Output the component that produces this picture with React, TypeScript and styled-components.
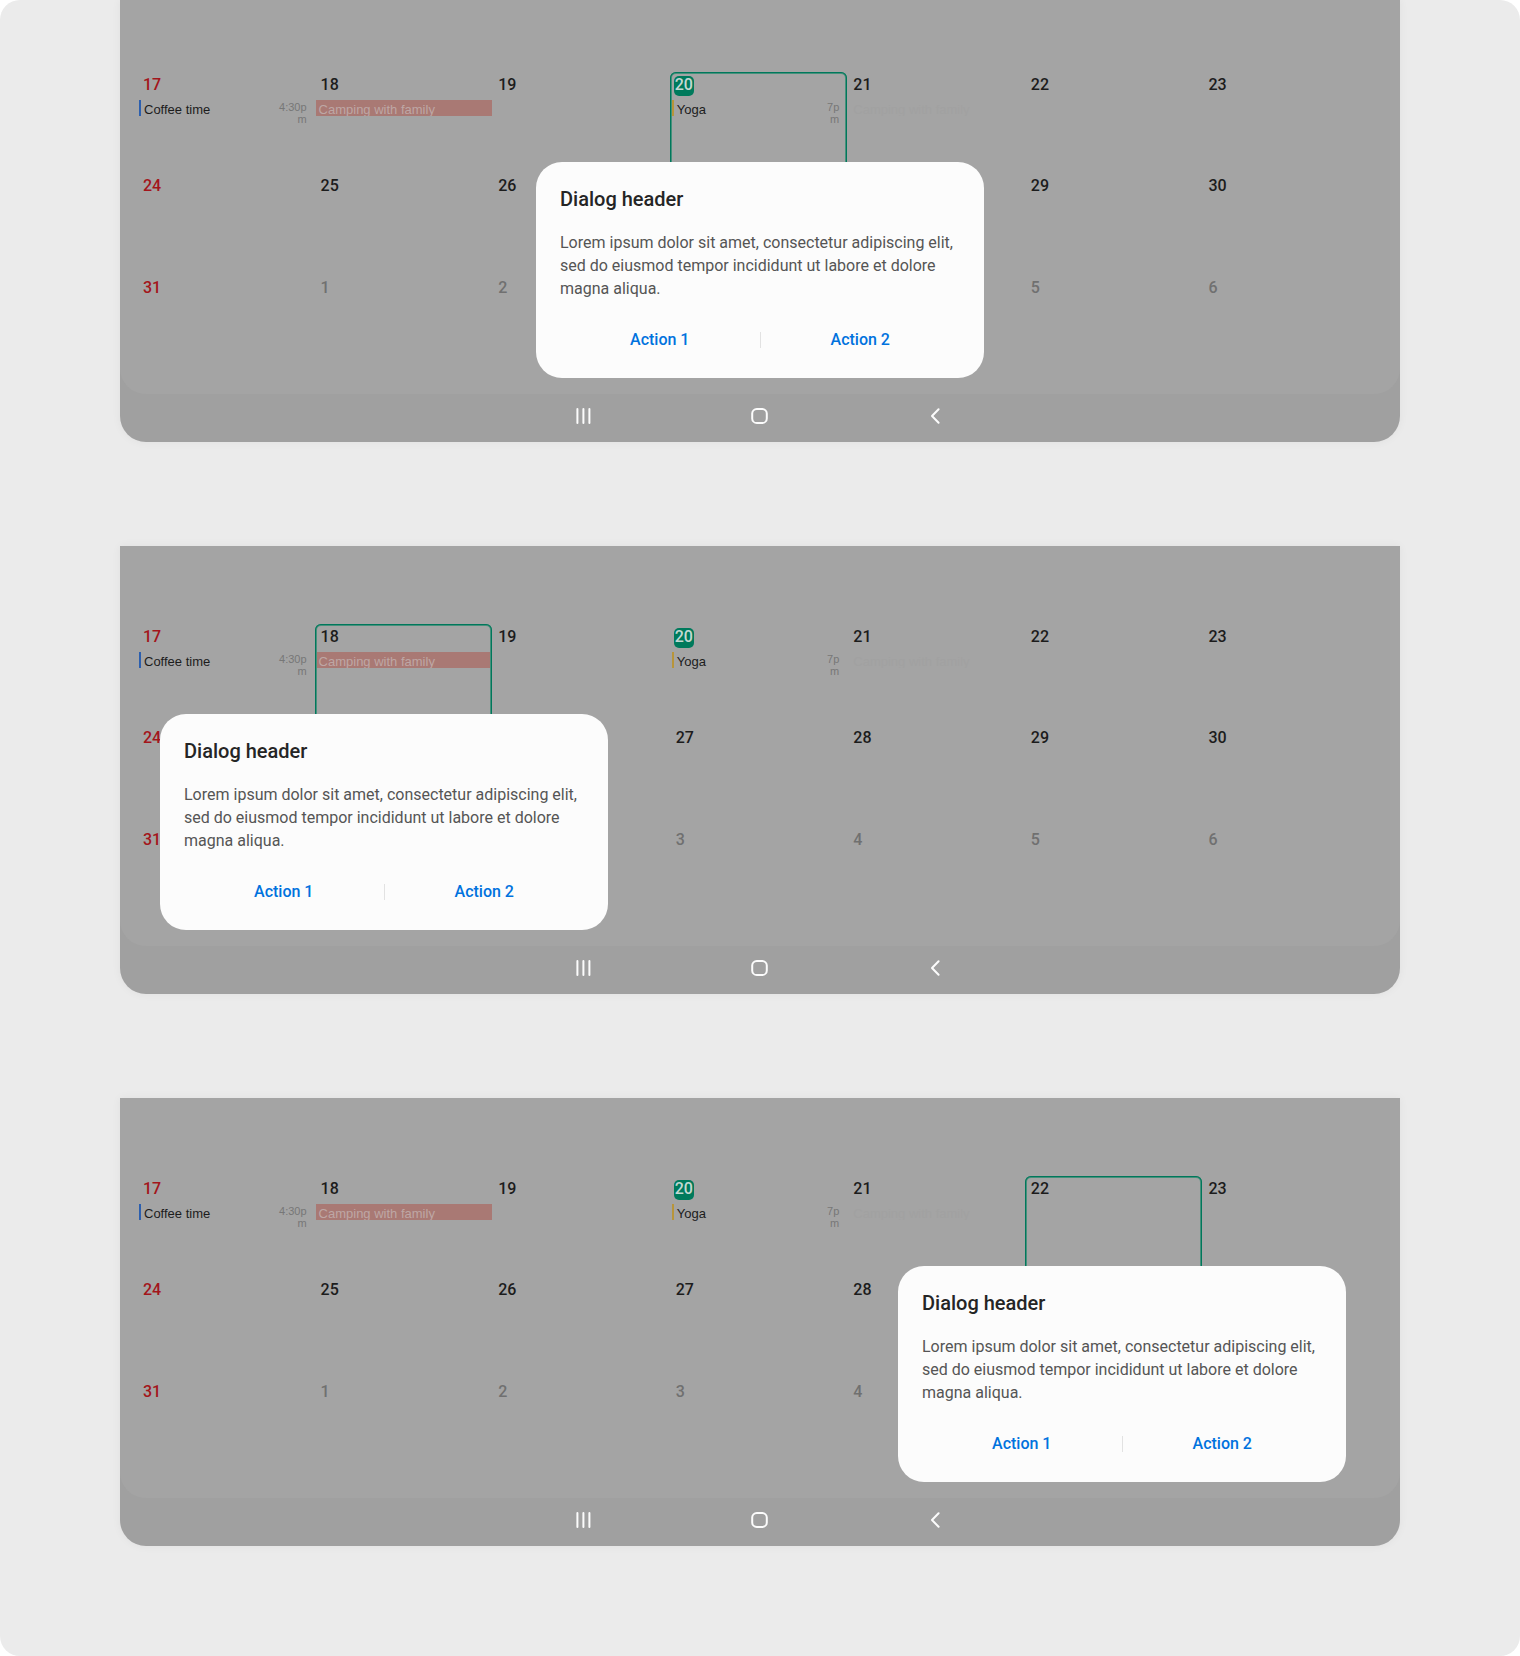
import React from "react";
import styled, { createGlobalStyle, css } from "styled-components";

const GlobalStyle = createGlobalStyle`
  *, *::before, *::after { box-sizing: border-box; }
  body {
    margin: 0;
    background: #ffffff;
    font-family: Roboto, "Liberation Sans", sans-serif;
  }
`;

const Page = styled.main`
  display: flex;
  flex-direction: column;
  gap: 104px;
  padding: 0 120px 110px;
  background: #ebebeb;
  border-radius: 20px;
  overflow: hidden;
`;

const Screen = styled.section`
  position: relative;
  background: #a0a0a0;
  border-radius: 0 0 26px 26px;
  box-shadow: 0 0 10px rgba(0, 0, 0, 0.05);
`;

const CalendarArea = styled.div<{ $clipped: boolean }>`
  padding: ${(p) => (p.$clipped ? "72px" : "78px")} 20px 17px 17px;
  background: #a4a4a4;
  border-radius: 0 0 26px 26px;
`;

const Month = styled.table`
  display: block;
  width: 100%;
`;

const Weeks = styled.tbody`
  display: block;
`;

const Week = styled.tr`
  display: grid;
  grid-template-columns: repeat(7, minmax(0, 1fr));
  height: 102px;

  &:first-child {
    height: 101px;
  }
`;

const Day = styled.td<{ $selected: boolean }>`
  position: relative;
  padding: 0;
  ${(p) =>
    p.$selected &&
    css`
      &::after {
        content: "";
        position: absolute;
        inset: 0;
        border-radius: 6px;
        box-shadow: inset 0 0 0 1px #00775b, inset 0 0 0 2px #45907b;
        pointer-events: none;
      }
    `}
`;

const dateColors = {
  sunday: "#a3151b",
  normal: "#1c1c1c",
  muted: "#707070",
  today: "#c3d9d3",
};

type DateTone = keyof typeof dateColors;

const DateLabel = styled.time<{ $tone: DateTone; $covered: boolean }>`
  display: block;
  width: 20px;
  height: 20px;
  margin: 4px 0 4px 5px;
  padding-left: 1px;
  border-radius: 5px;
  color: ${(p) => dateColors[p.$tone]};
  font-size: 16px;
  line-height: 17px;
  font-weight: 500;
  visibility: ${(p) => (p.$covered ? "hidden" : "visible")};
  ${(p) =>
    p.$tone === "today" &&
    css`
      margin-left: 4px;
      background: #007a5c;
    `}
`;

const EventRow = styled.div`
  display: flex;
  justify-content: space-between;
  height: 16px;
  padding: 0 8px 0 2px;
  font-family: "Liberation Sans", Arial, sans-serif;
`;

const EventTitle = styled.span<{ $bar: string }>`
  height: 16px;
  padding-left: 3px;
  border-left: 2px solid ${(p) => p.$bar};
  color: #1c1c1c;
  font-size: 13px;
  line-height: 19px;
  white-space: nowrap;
`;

const EventTime = styled.span`
  padding-top: 1px;
  color: #777777;
  font-size: 11px;
  line-height: 12px;
  text-align: right;
  white-space: pre;
`;

const AllDayEvent = styled.div<{ $faded?: boolean }>`
  height: 16px;
  margin-left: 1px;
  padding-left: ${(p) => (p.$faded ? "5px" : "3px")};
  overflow: hidden;
  background: ${(p) => (p.$faded ? "transparent" : "#a97974")};
  color: ${(p) => (p.$faded ? "#a1a1a1" : "#bea7a5")};
  font-family: "Liberation Sans", Arial, sans-serif;
  font-size: 13px;
  line-height: 19px;
  white-space: nowrap;
`;

const NavBar = styled.nav`
  display: flex;
  justify-content: center;
  align-items: center;
  gap: 152px;
  height: 48px;
  padding-bottom: 4px;
`;

const NavButton = styled.button`
  display: flex;
  width: 24px;
  height: 24px;
  padding: 0;
  border: 0;
  background: none;
  color: #fcfcfc;
`;

type Placement = "center" | "left" | "right";

const placements = {
  center: css`
    left: 50%;
    margin-left: -224px;
  `,
  left: css`
    left: 40px;
  `,
  right: css`
    right: 54px;
  `,
};

const Dialog = styled.div<{ $placement: Placement }>`
  position: absolute;
  bottom: 64px;
  ${(p) => placements[p.$placement]}
  width: 448px;
  padding: 24px;
  border-radius: 26px;
  background: #fcfcfc;
`;

const DialogTitle = styled.h2`
  margin: 0 0 19px;
  color: #252525;
  font-size: 20px;
  line-height: 26px;
  font-weight: 500;
`;

const DialogText = styled.p`
  margin: 0 0 26px;
  color: #555555;
  font-size: 16px;
  line-height: 23px;
`;

const DialogActions = styled.div`
  display: flex;
  align-items: center;
  height: 28px;
`;

const ActionButton = styled.button`
  flex: 1;
  height: 28px;
  padding: 0;
  border: 0;
  background: none;
  color: #0072de;
  font-family: inherit;
  font-size: 16px;
  line-height: 20px;
  font-weight: 500;
`;

const Divider = styled.span`
  width: 1px;
  height: 16px;
  background: #e2e2e2;
`;

const weeks: number[][] = [
  [17, 18, 19, 20, 21, 22, 23],
  [24, 25, 26, 27, 28, 29, 30],
  [31, 1, 2, 3, 4, 5, 6],
];

const events: Record<number, React.ReactNode> = {
  17: (
    <EventRow>
      <EventTitle $bar="#2c5fae">Coffee time</EventTitle>
      <EventTime>{"4:30p\nm"}</EventTime>
    </EventRow>
  ),
  18: <AllDayEvent>Camping with family</AllDayEvent>,
  20: (
    <EventRow>
      <EventTitle $bar="#b8953a">Yoga</EventTitle>
      <EventTime>{"7p\nm"}</EventTime>
    </EventRow>
  ),
  21: <AllDayEvent $faded>Camping with family</AllDayEvent>,
};

function toneOf(day: number): DateTone {
  if (day === 20) return "today";
  if (day < 7) return "muted";
  return [17, 24, 31].includes(day) ? "sunday" : "normal";
}

function Navigation() {
  return (
    <NavBar aria-label="System navigation">
      <NavButton type="button" aria-label="Recents">
        <svg width="24" height="24" viewBox="0 0 24 24" fill="none" stroke="currentColor" strokeWidth="2" strokeLinecap="round">
          <path d="M5.4 5v14M11.4 5v14M17.4 5v14" />
        </svg>
      </NavButton>
      <NavButton type="button" aria-label="Home">
        <svg width="24" height="24" viewBox="0 0 24 24" fill="none" stroke="currentColor" strokeWidth="2">
          <rect x="4.2" y="5" width="14.6" height="14" rx="4.6" />
        </svg>
      </NavButton>
      <NavButton type="button" aria-label="Back">
        <svg width="24" height="24" viewBox="0 0 24 24" fill="none" stroke="currentColor" strokeWidth="2" strokeLinecap="round" strokeLinejoin="round">
          <path d="M14.6 5.2 8 12l6.6 6.8" />
        </svg>
      </NavButton>
    </NavBar>
  );
}

interface DeviceProps {
  selected: number;
  placement: Placement;
  covered: number[];
  clipped?: boolean;
}

function Device({ selected, placement, covered, clipped = false }: DeviceProps) {
  const titleId = `dialog-${placement}`;
  return (
    <Screen>
      <CalendarArea $clipped={clipped}>
        <Month>
          <Weeks>
            {weeks.map((week) => (
              <Week key={week[0]}>
                {week.map((day) => (
                  <Day key={day} $selected={day === selected}>
                    <DateLabel $tone={toneOf(day)} $covered={covered.includes(day)}>
                      {day}
                    </DateLabel>
                    {events[day]}
                  </Day>
                ))}
              </Week>
            ))}
          </Weeks>
        </Month>
      </CalendarArea>
      <Navigation />
      <Dialog $placement={placement} role="dialog" aria-labelledby={titleId}>
        <DialogTitle id={titleId}>Dialog header</DialogTitle>
        <DialogText>
          Lorem ipsum dolor sit amet, consectetur adipiscing elit, sed do eiusmod tempor incididunt ut labore et
          dolore magna aliqua.
        </DialogText>
        <DialogActions>
          <ActionButton type="button">Action 1</ActionButton>
          <Divider />
          <ActionButton type="button">Action 2</ActionButton>
        </DialogActions>
      </Dialog>
    </Screen>
  );
}

export default function App() {
  return (
    <>
      <GlobalStyle />
      <Page>
        <Device selected={20} placement="center" covered={[27, 28, 3, 4]} clipped />
        <Device selected={18} placement="left" covered={[25, 26, 1, 2]} />
        <Device selected={22} placement="right" covered={[29, 30, 5, 6]} />
      </Page>
    </>
  );
}
